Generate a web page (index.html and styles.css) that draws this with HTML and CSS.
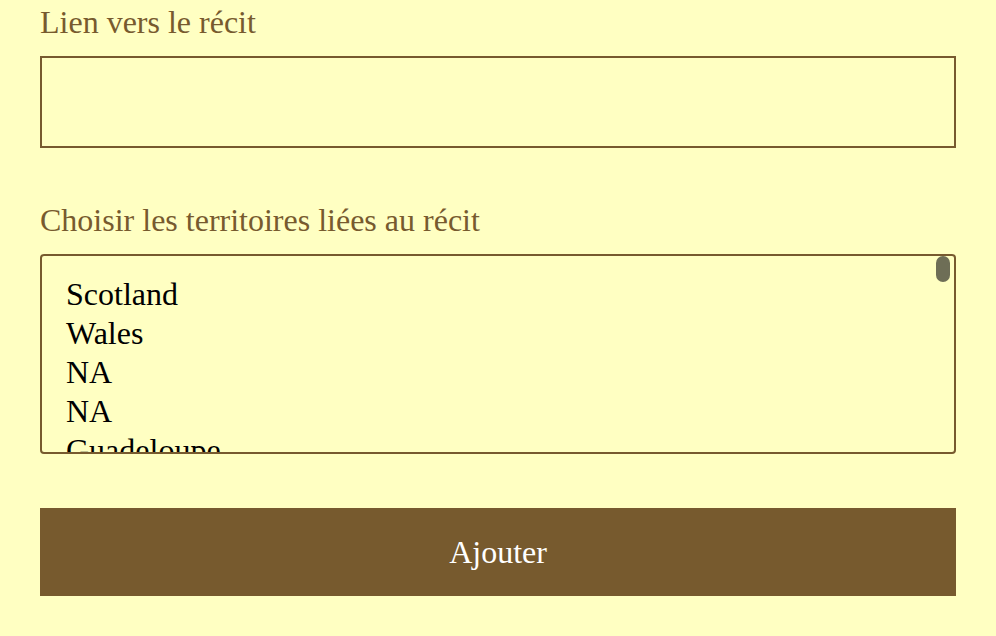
FILE: index.html
```html
<!DOCTYPE html>
<html lang="fr">
<head>
<meta charset="utf-8">
<title>Ajouter un récit</title>
<link rel="stylesheet" href="styles.css">
</head>
<body>
<form class="form">
  <label class="label" for="lien">Lien vers le récit</label>
  <input class="field" id="lien" type="text">
  <label class="label label-second" for="terr">Choisir les territoires liées au récit</label>
  <div class="list-wrap">
    <select class="list" id="terr" multiple>
      <option>Scotland</option>
      <option>Wales</option>
      <option>NA</option>
      <option>NA</option>
      <option>Guadeloupe</option>
      <option>Martinique</option>
      <option>Guyane</option>
      <option>La Réunion</option>
      <option>Mayotte</option>
      <option>Corse</option>
      <option>Bretagne</option>
      <option>Normandie</option>
      <option>Occitanie</option>
      <option>Provence</option>
      <option>Alsace</option>
      <option>Lorraine</option>
      <option>Savoie</option>
      <option>Auvergne</option>
      <option>Bourgogne</option>
      <option>Picardie</option>
      <option>Flandre</option>
      <option>Wallonie</option>
      <option>Québec</option>
      <option>Acadie</option>
      <option>Catalogne</option>
      <option>Pays basque</option>
      <option>Galice</option>
      <option>Sardaigne</option>
      <option>Sicile</option>
      <option>Irlande</option>
      <option>Cornouailles</option>
      <option>Frise</option>
      <option>Laponie</option>
      <option>Tyrol</option>
      <option>Kabylie</option>
      <option>Nouvelle-Calédonie</option>
      <option>Polynésie</option>
    </select>
    <span class="thumb" aria-hidden="true"></span>
  </div>
  <button class="submit" type="button">Ajouter</button>
</form>
</body>
</html>
```

FILE: styles.css
```css
html, body {
  margin: 0;
  padding: 0;
  background: #ffffc2;
}

body {
  font-family: "Liberation Serif", "Times New Roman", serif;
  font-size: 32px;
}

.form {
  display: flex;
  flex-direction: column;
  padding: 4px 40px 0 40px;
}

.label {
  display: block;
  color: #775a2e;
  font-size: 32px;
  line-height: 36px;
  margin-bottom: 16px;
}

.label-second {
  margin-top: 54px;
}

.field {
  box-sizing: border-box;
  width: 100%;
  height: 92px;
  margin: 0;
  border: 2px solid #775a2e;
  border-radius: 0;
  background: transparent;
  font-family: inherit;
  font-size: 32px;
  padding: 0 24px;
  outline: none;
}

.list-wrap {
  position: relative;
}

.list {
  display: block;
  box-sizing: border-box;
  width: 100%;
  height: 200px;
  margin: 0;
  border: 2px solid #775a2e;
  border-radius: 4px;
  background: transparent;
  font-family: inherit;
  font-size: 32px;
  color: #000;
  padding: 20px 0 16px 24px;
  outline: none;
  scrollbar-width: none;
}

.list::-webkit-scrollbar {
  display: none;
}

.list option {
  padding: 0;
  height: 39px;
  line-height: 39px;
  background: transparent;
  color: #000;
}

.thumb {
  position: absolute;
  top: 2px;
  right: 6px;
  width: 14px;
  height: 26px;
  border-radius: 7px;
  background: #6e6e56;
  pointer-events: none;
}

.submit {
  box-sizing: border-box;
  width: 100%;
  height: 88px;
  margin: 54px 0 0 0;
  border: none;
  border-radius: 0;
  background: #775a2e;
  color: #ffffff;
  font-family: inherit;
  font-size: 32px;
  padding: 0;
  cursor: pointer;
}
```
